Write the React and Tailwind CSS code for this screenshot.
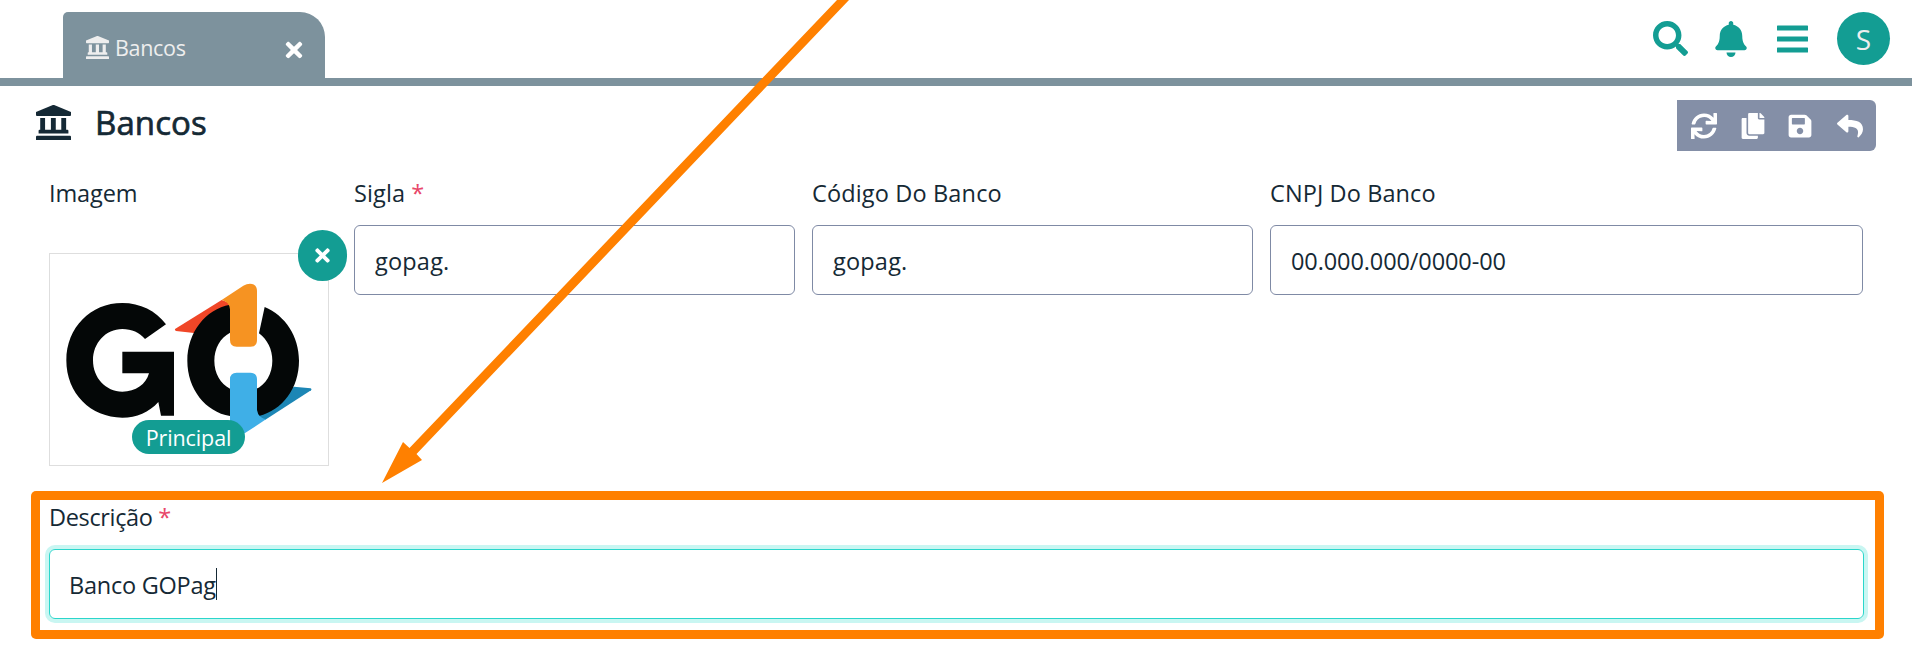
import React from "react";
import { FaTimes, FaSearch, FaBell, FaSync, FaCopy, FaSave, FaReply } from "react-icons/fa";

function BankIcon({ className }) {
  return (
    <svg viewBox="0 0 108 106" preserveAspectRatio="none" fill="currentColor" className={className}>
      <path d="M0 21 L52 0 H56 L108 21 V30 Q108 33 105 33 H3 Q0 33 0 30Z" />
      <path d="M13 39 H28 V75 H46 V39 H61 V75 H78 V39 H93 V75 H97 Q100 75 100 78 V86 H8 V78 Q8 75 11 75 H13Z" />
      <path d="M3 93 H105 Q108 93 108 96 V106 H0 V96 Q0 93 3 93Z" />
    </svg>
  );
}

function MenuIcon({ className }) {
  return (
    <svg viewBox="0 0 31 28" fill="currentColor" className={className}>
      <rect x="0" y="0.5" width="31" height="5" rx="0.6" />
      <rect x="0" y="11.5" width="31" height="5" rx="0.6" />
      <rect x="0" y="22.5" width="31" height="5" rx="0.6" />
    </svg>
  );
}

function Logo() {
  return (
    <svg viewBox="60 102 834 633" className="h-[211px] w-[278px]">
      <path fill="#f04627" d="M435 327 L575 240 L602 250 V275 L560 300 L492 339 L438 333 Q433 330 435 327Z" />
      <path fill="#1c86b5" d="M843 511 L706 599 L680 590 L720 550 L792 500 L842 505 Q847 508 843 511Z" />
      <path
        fill="#040707"
        d="M408 313 L345 357 C329 338 305 327 277 327 C227 327 189 369 189 421 C189 474 227 515 277 515 C317 515 348 493 357 460 H277 V395 H432 V587 H393 L385 546 C357 577 320 593 277 593 C182 593 109 520 109 421 C109 323 182 249 277 249 C331 249 377 272 408 313Z"
      />
      <path
        fill="#040707"
        d="M600 254 C526 268 472 337 472 422 C472 507 526 575 600 588 V506 C571 491 553 459 553 422 C553 385 571 353 600 338Z"
      />
      <path
        fill="#040707"
        d="M704 261 C766 287 807 349 807 422 C807 505 757 570 687 588 L676 580 V508 C708 494 727 461 727 422 C727 388 712 359 687 340Z"
      />
      <path
        fill="#f69322"
        d="M575 240 L640 197 Q650 191 660 191 Q681 192 681 213 V360 Q681 380 661 380 H620 Q600 380 600 360 V268 Q598 245 575 240Z"
      />
      <path
        fill="#3fafe7"
        d="M600 478 Q600 458 620 458 H661 Q681 458 681 478 V570 Q685 594 708 598 L644 640 H600Z"
      />
    </svg>
  );
}

function Label({ children, required, className = "tracking-[-0.3px]" }) {
  return (
    <div className={`h-8 whitespace-nowrap text-[23.5px] leading-8 ${className}`}>
      {children}
      {required && <span className="text-[#e8476a]"> *</span>}
    </div>
  );
}

function Field({ label, labelClass, required, value, valueClass, className }) {
  return (
    <div className={className}>
      <Label required={required} className={labelClass}>
        {label}
      </Label>
      <div className="mt-4 flex h-[70px] items-center rounded-[6px] border border-[#7f8aa5] pl-5 pt-0.5 text-[23.5px] leading-8">
        <span className={valueClass}>{value}</span>
      </div>
    </div>
  );
}

export default function App() {
  return (
    <div className="relative h-[660px] w-[1912px] overflow-hidden bg-white font-['Open_Sans','Noto_Sans',sans-serif] text-[#152935]">
      <header className="flex h-[86px] items-start justify-between border-b-8 border-[#7d929d] pl-[63px] pr-[22px] pt-3">
        <div className="flex h-[66px] w-[262px] items-center rounded-tl-[5px] rounded-tr-[25px] bg-[#7d929d] pl-[23px] pr-[19px] pt-[5px] text-[#eeeeee]">
          <BankIcon className="mb-px h-[23px] w-[23px] shrink-0" />
          <span className="ml-[6px] text-[21.5px] leading-8 tracking-[-0.3px]">Bancos</span>
          <FaTimes className="ml-auto mt-[4px] size-[24px] text-white" />
        </div>
        <div className="flex h-[53px] items-center text-[#139d93]">
          <FaSearch className="size-[35px]" />
          <FaBell className="ml-[25px] mr-px size-[36px]" />
          <MenuIcon className="ml-[27px] h-7 w-[31px]" />
          <div className="ml-[29px] flex size-[53px] items-center justify-center rounded-full bg-[#139d93] pt-px text-[28px] text-[#eeeeee]">
            S
          </div>
        </div>
      </header>

      <div className="flex h-[91px] items-start justify-between pl-9 pr-9 pt-3.5">
        <h1 className="flex items-center pt-[5px]">
          <BankIcon className="mb-px h-[35px] w-[35px]" />
          <span className="ml-6 text-[33px] leading-9 tracking-[0.1px] [-webkit-text-stroke:0.7px]">Bancos</span>
        </h1>
        <div className="flex h-[51px] w-[199px] items-center rounded-r-[6px] bg-[#848fa7] pl-3.5 text-white">
          <FaSync className="size-[26px]" />
          <FaCopy className="ml-[23px] size-[26px]" />
          <FaSave className="ml-[21px] size-[26px]" />
          <FaReply className="ml-[24px] size-[26px]" />
        </div>
      </div>

      <main className="flex pl-[49px]">
        <div className="w-[280px]">
          <Label className="tracking-[-0.1px]">Imagem</Label>
          <div className="relative mt-11 h-[213px] w-[280px] border border-[#dedede]">
            <Logo />
            <span className="absolute left-[82px] top-[166px] flex h-[34px] w-[113px] items-center justify-center rounded-full bg-[#139d93] pt-0.5 text-[21.5px] tracking-[-0.1px] text-white">
              Principal
            </span>
            <span className="absolute left-[248px] top-[-24px] flex h-[51px] w-[49px] items-center justify-center rounded-full bg-[#139d93] text-white">
              <FaTimes className="size-[21px]" />
            </span>
          </div>
        </div>
        <div className="ml-[25px] flex gap-[17px]">
          <Field
            className="w-[441px]"
            label="Sigla"
            labelClass="tracking-[0.1px]"
            required
            value="gopag."
            valueClass="tracking-[0.2px]"
          />
          <Field
            className="w-[441px]"
            label="Código Do Banco"
            labelClass="tracking-[0.15px]"
            value="gopag."
            valueClass="tracking-[0.2px]"
          />
          <Field
            className="w-[593px]"
            label="CNPJ Do Banco"
            labelClass="tracking-[0.1px]"
            value="00.000.000/0000-00"
            valueClass="tracking-[-0.1px]"
          />
        </div>
      </main>

      <section className="ml-[31px] mt-[25px] h-[148px] w-[1853px] rounded-[5px] bg-[#ff8000] p-[9px]">
        <div className="h-[130px] bg-white px-[9px] pt-px">
          <Label required className="tracking-[-0.35px]">
            Descrição
          </Label>
          <div className="mt-4 flex h-[70px] w-[1815px] items-center rounded-[6px] border border-[#2bd6cb] pl-[19px] pt-0.5 text-[23.5px] leading-8 ring-4 ring-[#c9f6f2]">
            <span className="tracking-[-0.25px]">Banco GOPag</span>
            <span className="mb-0.5 h-8 w-px bg-[#152935]" />
          </div>
        </div>
      </section>

      <svg viewBox="0 0 500 500" className="pointer-events-none absolute left-[370px] top-0 size-[500px]">
        <polygon fill="#ff8000" points="467,0 479,0 46.5,454 52,460 12,483 33,442 39.5,448" />
      </svg>
    </div>
  );
}
